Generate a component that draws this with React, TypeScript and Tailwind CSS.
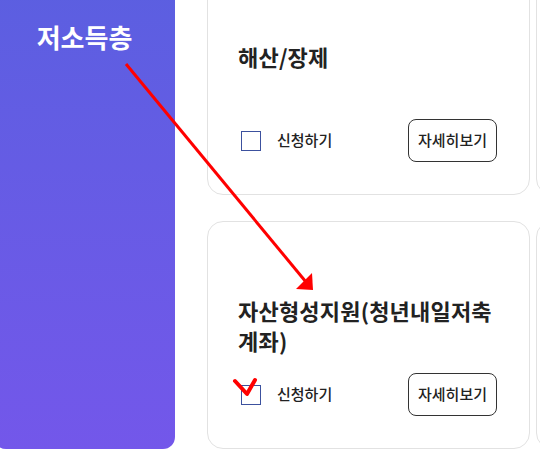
import { Fragment } from "react";

// Card data
const cards = [
  { id: 1, title: "해산/장제" },
  { id: 2, title: "자산형성지원(청년내일저축계좌)" },
];

const font = { fontFamily: '"Noto Sans CJK KR", "Noto Sans", sans-serif' };

const Card = ({ title }: { title?: string }) => (
  <div className="h-[228px] border border-[#e2e2e2] rounded-2xl bg-white flex flex-col justify-between pt-[73px] pb-[32px] pl-[30px] pr-[32px]">
    <h2 className="text-[22px] leading-[30px] font-bold text-[#222] tracking-[0.2px]">{title}</h2>
    {title && (
      <div className="flex items-center justify-between">
        <label className="flex items-center gap-[16px] pl-[3px]">
          <span className="w-[20px] h-[20px] border-[1.5px] border-[#3c519e] bg-white" />
          <span className="text-[15px] font-medium text-[#222]">신청하기</span>
        </label>
        <button className="w-[89px] h-[43px] border border-[#333] rounded-lg text-[15px] font-medium text-[#222]">자세히보기</button>
      </div>
    )}
  </div>
);

export default function App() {
  return (
    <div className="relative w-[540px] h-[457px] overflow-hidden bg-white" style={font}>
      <div className="flex gap-[32px] -mt-[33px]">
        {/* ---------- Side panel ---------- */}
        <div className="w-[181px] -ml-[6px] shrink-0 rounded-b-xl bg-gradient-to-b from-[#5a5fe0] to-[#7357ea] pt-[52px] text-center">
          <h1 className="text-[26px] leading-[36px] font-bold text-white">저소득층</h1>
        </div>
        {/* ---------- Cards ---------- */}
        <div className="grid grid-cols-[323px_323px] gap-x-[6px] gap-y-[26px]">
          {cards.map((card) => (
            <Fragment key={card.id}>
              <Card title={card.title} />
              <Card />
            </Fragment>
          ))}
        </div>
      </div>

      {/* ---------- Annotations ---------- */}
      <svg className="absolute inset-0 pointer-events-none" width="540" height="457" viewBox="0 0 540 457">
        <line x1="126" y1="64" x2="306" y2="282" stroke="#ff0000" strokeWidth="3" />
        <polygon points="313,290 296,289 312,273" fill="#ff0000" />
        <polyline points="235,381 247,394 255,380" fill="none" stroke="#ff0000" strokeWidth="4" strokeLinecap="round" strokeLinejoin="round" />
      </svg>
    </div>
  );
}
